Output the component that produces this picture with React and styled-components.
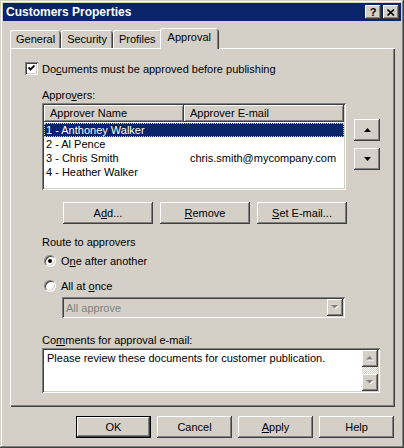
import React from 'react';
import styled, { createGlobalStyle } from 'styled-components';

const face = '#d4d0c8';
const raised = `inset -1px -1px #404040, inset 1px 1px #ffffff, inset -2px -2px #808080, inset 2px 2px ${face}`;
const sunken = `inset 1px 1px #808080, inset -1px -1px #ffffff, inset 2px 2px #404040, inset -2px -2px ${face}`;

const GlobalStyle = createGlobalStyle`
  body {
    margin: 0;
    background: ${face};
    font-family: Tahoma, "Liberation Sans", Arial, sans-serif;
    font-size: 11px;
    color: #000;
  }
  u { text-underline-offset: 1px; }
`;

const Window = styled.div`
  width: 404px;
  height: 448px;
  box-sizing: border-box;
  padding: 3px;
  background: ${face};
  box-shadow: inset -1px -1px #404040, inset 1px 1px ${face}, inset -2px -2px #808080, inset 2px 2px #ffffff;
  display: flex;
  flex-direction: column;
`;

const TitleBar = styled.div`
  height: 18px;
  background: #0a246a;
  display: flex;
  align-items: center;
  justify-content: space-between;
  padding: 0 2px 0 3px;
`;

const Title = styled.div`
  color: #fff;
  font-weight: bold;
  font-size: 12px;
`;

const CaptionButtons = styled.div`
  display: flex;
  gap: 2px;
`;

const CaptionButton = styled.div`
  width: 16px;
  height: 14px;
  background: ${face};
  box-shadow: ${raised};
  display: flex;
  align-items: center;
  justify-content: center;
  font-weight: bold;
  font-size: 11px;
  line-height: 14px;
`;

const TabRow = styled.div`
  display: flex;
  align-items: flex-end;
  height: 21px;
  margin: 7px 0 -1px 7px;
  position: relative;
  z-index: 1;
`;

const Tab = styled.div`
  height: ${p => (p.$active ? 21 : 18)}px;
  margin: ${p => (p.$active ? '0 -2px' : '0 0 1px')};
  padding: 0 ${p => (p.$active ? 8 : 6)}px;
  box-sizing: border-box;
  background: ${face};
  border-radius: 3px 3px 0 0;
  box-shadow: inset 1px 0 #fff, inset 0 1px #fff, inset -1px 0 #404040, inset -2px 0 #808080;
  line-height: ${p => (p.$active ? 19 : 18)}px;
  position: relative;
  z-index: ${p => (p.$active ? 2 : 1)};
`;

const Panel = styled.div`
  height: 359px;
  margin: 0 6px 0 7px;
  box-sizing: border-box;
  padding: 14px 15px 0 15px;
  box-shadow: inset 1px 1px #fff, inset -1px -1px #404040, inset -2px -2px #808080;
  display: flex;
  flex-direction: column;
`;

const CheckRow = styled.label`
  display: flex;
  align-items: center;
  gap: 4px;
  height: 13px;
`;

const CheckBox = styled.div`
  width: 13px;
  height: 13px;
  box-sizing: border-box;
  background: #fff;
  box-shadow: ${sunken};
  display: flex;
  align-items: center;
  justify-content: center;
`;

const Section = styled.div`
  margin-left: 17px;
  display: flex;
  flex-direction: column;
`;

const Caption = styled.div`
  line-height: 13px;
  margin-top: ${p => p.$top || 0}px;
`;

const ListRow = styled.div`
  display: flex;
  align-items: flex-start;
  gap: 8px;
  margin-top: 1px;
`;

const List = styled.div`
  width: 304px;
  height: 87px;
  box-sizing: border-box;
  padding: 2px;
  background: #fff;
  box-shadow: ${sunken};
`;

const HeaderRow = styled.div`
  display: flex;
  height: 17px;
  margin-bottom: 1px;
`;

const HeaderCell = styled.div`
  width: ${p => p.$w}px;
  box-sizing: border-box;
  padding-left: 6px;
  background: ${face};
  box-shadow: ${raised};
  line-height: 17px;
`;

const Row = styled.div`
  display: flex;
  height: 14px;
  line-height: 14px;
  box-sizing: border-box;
  background: ${p => (p.$selected ? '#0a246a' : 'transparent')};
  color: ${p => (p.$selected ? '#fff' : '#000')};
  outline: ${p => (p.$selected ? '1px dotted #d4d0c8' : 'none')};
  outline-offset: -1px;
`;

const Cell = styled.div`
  width: ${p => p.$w}px;
  padding-left: ${p => p.$pad}px;
  box-sizing: border-box;
  white-space: nowrap;
`;

const ArrowColumn = styled.div`
  display: flex;
  flex-direction: column;
  gap: 7px;
  margin-top: 16px;
`;

const Button = styled.div`
  width: ${p => p.$w}px;
  height: ${p => p.$h || 22}px;
  box-sizing: border-box;
  background: ${face};
  box-shadow: ${raised};
  display: flex;
  align-items: center;
  justify-content: center;
  border: ${p => (p.$default ? '1px solid #000' : 'none')};
`;

const ButtonRow = styled.div`
  display: flex;
  gap: 7px;
  margin: 12px 0 0 21px;
`;

const RadioRow = styled.div`
  display: flex;
  align-items: center;
  gap: 5px;
  height: 13px;
  margin: ${p => p.$top}px 0 0 2px;
`;

const Radio = styled.div`
  width: 12px;
  height: 12px;
  box-sizing: border-box;
  border-radius: 50%;
  border: 1px solid;
  border-color: #808080 #ffffff #ffffff #808080;
  background: #fff;
  box-shadow: inset 1px 1px #404040, inset -1px -1px ${face};
  display: flex;
  align-items: center;
  justify-content: center;
  &::after {
    content: '';
    width: 4px;
    height: 4px;
    border-radius: 50%;
    background: #000;
    display: ${p => (p.$on ? 'block' : 'none')};
  }
`;

const Select = styled.div`
  width: 283px;
  height: 21px;
  margin: 5px 0 0 20px;
  box-sizing: border-box;
  padding: 2px;
  background: ${face};
  box-shadow: ${sunken};
  display: flex;
  align-items: center;
  justify-content: space-between;
  color: #808080;
`;

const SelectText = styled.span`
  padding-left: 2px;
`;

const SmallArrow = styled.div`
  width: 16px;
  height: 17px;
  background: ${face};
  box-shadow: ${raised};
  display: flex;
  align-items: center;
  justify-content: center;
`;

const Memo = styled.div`
  width: 338px;
  height: 45px;
  margin-top: 1px;
  box-sizing: border-box;
  padding: 2px;
  background: #fff;
  box-shadow: ${sunken};
  display: flex;
`;

const MemoText = styled.div`
  flex: 1;
  padding: 2px 0 0 3px;
`;

const ScrollBar = styled.div`
  width: 16px;
  display: flex;
  flex-direction: column;
  justify-content: space-between;
  background-color: #fff;
  background-image: repeating-conic-gradient(${face} 0% 25%, #ffffff 0% 50%);
  background-size: 2px 2px;
`;

const Footer = styled.div`
  display: flex;
  justify-content: flex-end;
  gap: 6px;
  margin: 9px 7px 0 0;
`;

const Triangle = ({ down, color = '#000', w = 7 }) => (
  <svg width={w} height={Math.ceil(w / 2)} viewBox={`0 0 ${w} ${Math.ceil(w / 2)}`}>
    {down ? (
      <polygon points={`0,0 ${w},0 ${w / 2},${Math.ceil(w / 2)}`} fill={color} />
    ) : (
      <polygon points={`0,${Math.ceil(w / 2)} ${w},${Math.ceil(w / 2)} ${w / 2},0`} fill={color} />
    )}
  </svg>
);

const GrayTriangle = ({ down }) => (
  <svg width="8" height="5" viewBox="0 0 8 5">
    {down ? (
      <>
        <polygon points="1,1 8,1 4.5,4.5" fill="#fff" />
        <polygon points="0,0 7,0 3.5,3.5" fill="#808080" />
      </>
    ) : (
      <>
        <polygon points="1,4.5 8,4.5 4.5,1" fill="#fff" />
        <polygon points="0,3.5 7,3.5 3.5,0" fill="#808080" />
      </>
    )}
  </svg>
);

const approvers = [
  { name: '1 - Anthoney Walker', email: '' },
  { name: '2 - Al Pence', email: '' },
  { name: '3 - Chris Smith', email: 'chris.smith@mycompany.com' },
  { name: '4 - Heather Walker', email: '' },
];

export default function App() {
  return (
    <>
      <GlobalStyle />
      <Window>
        <TitleBar>
          <Title>Customers Properties</Title>
          <CaptionButtons>
            <CaptionButton>?</CaptionButton>
            <CaptionButton>
              <svg width="8" height="7" viewBox="0 0 8 7">
                <path d="M0.5 0.5 L7 6.5 M7 0.5 L0.5 6.5" stroke="#000" strokeWidth="1.6" />
              </svg>
            </CaptionButton>
          </CaptionButtons>
        </TitleBar>

        <TabRow>
          <Tab>General</Tab>
          <Tab>Security</Tab>
          <Tab>Profiles</Tab>
          <Tab $active>Approval</Tab>
        </TabRow>

        <Panel>
          <CheckRow>
            <CheckBox>
              <svg width="7" height="7" viewBox="0 0 7 7">
                <path d="M0.5 2.5 L2.5 4.5 L6.5 0.5" stroke="#000" strokeWidth="1.8" fill="none" />
              </svg>
            </CheckBox>
            <span>Do<u>c</u>uments must be approved before publishing</span>
          </CheckRow>

          <Section>
            <Caption $top={14}>Appro<u>v</u>ers:</Caption>
            <ListRow>
              <List>
                <HeaderRow>
                  <HeaderCell $w={140}>Approver Name</HeaderCell>
                  <HeaderCell $w={160}>Approver E-mail</HeaderCell>
                </HeaderRow>
                {approvers.map((a, i) => (
                  <Row key={a.name} $selected={i === 0}>
                    <Cell $w={140} $pad={2}>{a.name}</Cell>
                    <Cell $w={160} $pad={6}>{a.email}</Cell>
                  </Row>
                ))}
              </List>
              <ArrowColumn>
                <Button $w={26} $h={22}><Triangle /></Button>
                <Button $w={26} $h={22}><Triangle down /></Button>
              </ArrowColumn>
            </ListRow>

            <ButtonRow>
              <Button $w={90} $h={22}><span>A<u>d</u>d...</span></Button>
              <Button $w={90} $h={22}><span><u>R</u>emove</span></Button>
              <Button $w={90} $h={22}><span><u>S</u>et E-mail...</span></Button>
            </ButtonRow>

            <Caption $top={12}>Route to approvers</Caption>
            <RadioRow $top={5}>
              <Radio $on />
              <span>O<u>n</u>e after another</span>
            </RadioRow>
            <RadioRow $top={12}>
              <Radio />
              <span>All at <u>o</u>nce</span>
            </RadioRow>
            <Select>
              <SelectText>All approve</SelectText>
              <SmallArrow><GrayTriangle down /></SmallArrow>
            </Select>

            <Caption $top={16}>Co<u>m</u>ments for approval e-mail:</Caption>
            <Memo>
              <MemoText>Please review these documents for customer publication.</MemoText>
              <ScrollBar>
                <SmallArrow><GrayTriangle /></SmallArrow>
                <SmallArrow><GrayTriangle down /></SmallArrow>
              </ScrollBar>
            </Memo>
          </Section>
        </Panel>

        <Footer>
          <Button $w={75} $h={22} $default>OK</Button>
          <Button $w={75} $h={22}>Cancel</Button>
          <Button $w={75} $h={22}><span><u>A</u>pply</span></Button>
          <Button $w={75} $h={22}>Help</Button>
        </Footer>
      </Window>
    </>
  );
}
